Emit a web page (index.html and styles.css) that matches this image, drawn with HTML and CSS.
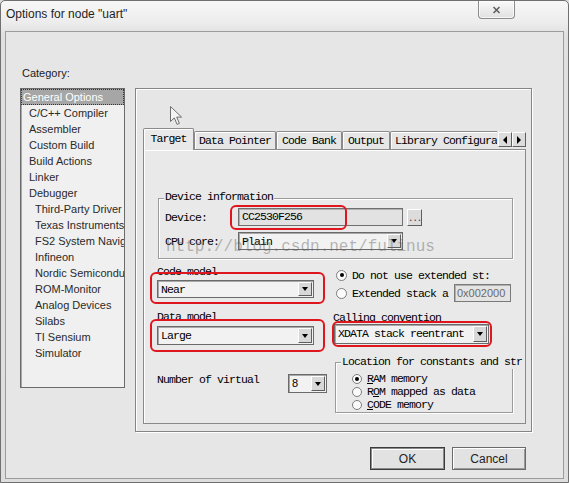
FILE: index.html
```html
<!DOCTYPE html>
<html lang="en">
<head>
<meta charset="utf-8">
<title>Options for node "uart"</title>
<link rel="stylesheet" href="styles.css">
</head>
<body>
<div class="window">
  <div class="titlebar">
    <span class="title">Options for node "uart"</span>
    <div class="close"><svg width="9" height="8" viewBox="0 0 9 8"><path d="M1.5 1 L7.5 7 M7.5 1 L1.5 7" stroke="#5c5c5c" stroke-width="1.5" fill="none"/></svg></div>
  </div>
  <div class="client">
    <div class="main">
      <div class="category">
        <div class="cat-label">Category:</div>
        <ul class="listbox">
          <li class="item sel">General Options</li>
          <li class="item l1">C/C++ Compiler</li>
          <li class="item l1">Assembler</li>
          <li class="item l1">Custom Build</li>
          <li class="item l1">Build Actions</li>
          <li class="item l1">Linker</li>
          <li class="item l1">Debugger</li>
          <li class="item l2">Third-Party Driver</li>
          <li class="item l2">Texas Instruments</li>
          <li class="item l2">FS2 System Navigator</li>
          <li class="item l2">Infineon</li>
          <li class="item l2">Nordic Semiconductor</li>
          <li class="item l2">ROM-Monitor</li>
          <li class="item l2">Analog Devices</li>
          <li class="item l2">Silabs</li>
          <li class="item l2">TI Sensium</li>
          <li class="item l2">Simulator</li>
        </ul>
      </div>
      <div class="frame">
        <div class="tabstrip">
          <div class="tabs">
            <div class="tab active w-target">Target</div>
            <div class="tab w-dp">Data Pointer</div>
            <div class="tab w-cb">Code Bank</div>
            <div class="tab w-out">Output</div>
            <div class="tab w-lib">Library Configura</div>
          </div>
          <div class="scroll">
            <span class="sbtn"><i class="tri-left"></i></span>
            <span class="sbtn"><i class="tri-right"></i></span>
          </div>
        </div>
        <div class="page">
          <div class="group devgroup">
            <span class="group-label">Device information</span>
            <div class="row">
              <span class="lbl-dev">Device:</span>
              <div class="field">CC2530F256</div>
              <div class="browse">...</div>
            </div>
            <div class="row">
              <span class="lbl-dev">CPU core:</span>
              <div class="combo cpu"><span class="combo-text">Plain</span><span class="drop"><i class="tri-down"></i></span></div>
            </div>
          </div>
          <div class="mid">
            <div class="col-left">
              <div class="mlabel first">Code model</div>
              <div class="combo model"><span class="combo-text">Near</span><span class="drop"><i class="tri-down"></i></span></div>
              <div class="mlabel second">Data model</div>
              <div class="combo model tall"><span class="combo-text">Large</span><span class="drop"><i class="tri-down"></i></span></div>
            </div>
            <div class="col-right">
              <div class="radio-row r1">
                <span class="radio on"></span>
                <span class="rtext w-ext1">Do not use extended st:</span>
              </div>
              <div class="radio-row r2">
                <span class="radio"></span>
                <span class="rtext w-ext2">Extended stack a</span>
                <div class="hexfield">0x002000</div>
              </div>
              <div class="mlabel third">Calling convention</div>
              <div class="combo call"><span class="combo-text">XDATA stack reentrant</span><span class="drop"><i class="tri-down"></i></span></div>
            </div>
          </div>
          <div class="bottom">
            <div class="nv-label">Number of virtual</div>
            <div class="combo nv"><span class="combo-text sans">8</span><span class="drop"><i class="tri-down"></i></span></div>
            <div class="group locgroup">
              <span class="group-label">Location for constants and str</span>
              <div class="loc-row"><span class="radio on"></span><span class="rtext"><u>R</u>AM memory</span></div>
              <div class="loc-row"><span class="radio"></span><span class="rtext">R<u>O</u>M mapped as data</span></div>
              <div class="loc-row"><span class="radio"></span><span class="rtext"><u>C</u>ODE memory</span></div>
            </div>
          </div>

          <div class="watermark">http://blog.csdn.net/fulinus</div>
          <div class="mark m-dev"></div>
          <div class="mark m-code"></div>
          <div class="mark m-data"></div>
          <div class="mark m-call"></div>
        </div>
      </div>
    </div>
    <div class="buttons">
      <button class="btn default">OK</button>
      <button class="btn">Cancel</button>
    </div>
  </div>
  <svg class="cursor" width="13" height="20" viewBox="0 0 13 20"><path d="M0.5 0.5 V15.5 L4.3 11.9 L7.1 18.4 L9.4 17.4 L6.7 11.1 H11.6 Z" fill="#f4f4f4" stroke="#6e6e6e" stroke-width="1"/></svg>
</div>
</body>
</html>
```

FILE: styles.css
```css
* { box-sizing: border-box; }
html, body { margin: 0; padding: 0; }
body {
  width: 569px;
  height: 483px;
  overflow: hidden;
  background: #dcdcdc;
  font-family: "Liberation Sans", Arial, sans-serif;
}
.window {
  position: relative;
  width: 569px;
  height: 483px;
  border: 1px solid #707070;
  border-radius: 5px 5px 0 0;
  background: linear-gradient(180deg, #f7f7f7 0, #ececec 22px, #e0e0e0 34px, #dedede 100%);
  display: flex;
  flex-direction: column;
}
.titlebar {
  height: 30px;
  flex: none;
  display: flex;
  justify-content: space-between;
  align-items: flex-start;
}
.title {
  margin: 6px 0 0 5px;
  font-size: 12px;
  line-height: 15px;
  color: #1f1f1f;
}
.close {
  width: 37px;
  height: 18px;
  margin-right: 53px;
  border: 1px solid #8c8c8c;
  border-top: 0;
  border-radius: 0 0 4px 4px;
  background: linear-gradient(#fafafa, #e0e0e0);
  box-shadow: inset 0 0 0 1px rgba(255,255,255,.7);
  display: flex;
  align-items: center;
  justify-content: center;
}
.client {
  margin-left: 4px;
  width: 559px;
  height: 448px;
  border: 1px solid #9c9c9c;
  background: #e6e6e6;
  padding: 35px 37px 0 14px;
  display: flex;
  flex-direction: column;
}
.main {
  display: flex;
  gap: 10px;
  align-items: flex-start;
}
.category { width: 105px; flex: none; }
.cat-label {
  font-size: 11px;
  line-height: 12px;
  height: 12px;
  color: #222;
  margin-bottom: 9px;
  padding-left: 2px;
}
.listbox {
  list-style: none;
  margin: 0;
  padding: 0;
  height: 300px;
  border: 1px solid #6b6b6b;
  box-shadow: inset 1px 1px #a8a8a8;
  background: #f0f0f0;
  overflow: hidden;
}
.item {
  height: 16px;
  line-height: 16px;
  font-size: 11px;
  color: #2a2a2a;
  white-space: nowrap;
  overflow: hidden;
}
.item.sel {
  background: #a6a6a6;
  color: #fff;
  padding-left: 2px;
  outline: 1px dotted #333;
  outline-offset: -1px;
}
.l1 { padding-left: 8px; }
.l2 { padding-left: 14px; }

.frame {
  flex: none;
  width: 397px;
  height: 344px;
  margin-top: 21px;
  border: 1px solid #858585;
  box-shadow: inset 1px 1px #fff, 1px 1px #fff;
  padding: 39px 5px 7px 7px;
  display: flex;
  flex-direction: column;
  font-family: "Liberation Mono", "Courier New", monospace;
  font-size: 11.5px;
  letter-spacing: -0.9px;
  color: #000;
}
.tabstrip {
  height: 21px;
  flex: none;
  display: flex;
  align-items: flex-end;
}
.tabs {
  flex: 1;
  min-width: 0;
  height: 22px;
  margin-bottom: -1px;
  display: flex;
  align-items: flex-end;
  overflow: hidden;
  position: relative;
  z-index: 1;
}
.tab {
  flex: none;
  height: 18px;
  margin-bottom: 1px;
  border: 1px solid #8a8a8a;
  border-bottom: 0;
  border-radius: 2px 2px 0 0;
  box-shadow: inset 1px 1px #fff;
  background: #e6e6e6;
  text-align: center;
  line-height: 17px;
  white-space: nowrap;
  overflow: hidden;
}
.tab.active {
  height: 22px;
  margin-bottom: 0;
  background: #e9e9e9;
  line-height: 19px;
}
.w-target { width: 51px; }
.w-dp { width: 82px; }
.w-cb { width: 66px; }
.w-out { width: 48px; }
.w-lib { width: 130px; text-align: left; padding-left: 4px; }
.scroll {
  flex: none;
  display: flex;
  margin-bottom: 2px;
  margin-left: 1px;
}
.sbtn {
  width: 14px;
  height: 15px;
  border: 1px solid;
  border-color: #fff #5e5e5e #5e5e5e #fff;
  background: #dcdcdc;
  display: flex;
  align-items: center;
  justify-content: center;
}
.tri-left { width: 0; height: 0; border-top: 4px solid transparent; border-bottom: 4px solid transparent; border-right: 4px solid #000; }
.tri-right { width: 0; height: 0; border-top: 4px solid transparent; border-bottom: 4px solid transparent; border-left: 4px solid #000; }
.tri-down { width: 0; height: 0; border-left: 3.5px solid transparent; border-right: 3.5px solid transparent; border-top: 4px solid #000; }

.page {
  position: relative;
  height: 275px;
  border: 1px solid #8a8a8a;
  box-shadow: inset 1px 1px #fff;
  background: #e9e9e9;
}

.group {
  position: relative;
  border: 1px solid #9b9b9b;
  box-shadow: inset 1px 1px #fff, 1px 1px #fff;
}
.group-label {
  position: absolute;
  top: -9px;
  left: 5px;
  padding: 0 1px;
  line-height: 14px;
  background: #e9e9e9;
  white-space: nowrap;
}
.devgroup {
  margin: 48px 0 0 14px;
  width: 355px;
  height: 61px;
  padding: 9px 0 0 6px;
}
.row {
  display: flex;
  align-items: center;
  height: 18px;
}
.row + .row { margin-top: 6px; }
.lbl-dev { width: 73px; flex: none; }
.field {
  width: 165px;
  height: 18px;
  border: 1px solid #707070;
  box-shadow: inset 1px 1px #b0b0b0;
  background: #e2e2e2;
  padding-left: 3px;
  line-height: 16px;
}
.browse {
  width: 15px;
  height: 17px;
  margin-left: 4px;
  border: 1px solid;
  border-color: #fff #5e5e5e #5e5e5e #fff;
  background: #dcdcdc;
  font-size: 9px;
  letter-spacing: -1px;
  line-height: 18px;
  text-align: center;
  color: #333;
}
.combo {
  display: flex;
  height: 18px;
  border: 1px solid #6a6a6a;
  box-shadow: inset 1px 1px #a8a8a8;
  background: #f2f2f2;
  padding: 1px;
}
.combo-text {
  flex: 1;
  min-width: 0;
  padding-left: 2px;
  line-height: 15px;
  white-space: nowrap;
  overflow: hidden;
}
.drop {
  flex: none;
  width: 14px;
  border: 1px solid;
  border-color: #fff #5e5e5e #5e5e5e #fff;
  background: #d8d8d8;
  display: flex;
  align-items: center;
  justify-content: center;
}
.combo.cpu { width: 165px; }

.mid { display: flex; }
.col-left { margin-left: 13px; width: 157px; flex: none; }
.col-right { margin-left: 19px; width: 179px; flex: none; }
.mlabel { line-height: 12px; height: 12px; white-space: nowrap; }
.mlabel.first { margin-top: 7px; }
.mlabel.second { margin-top: 13px; }
.mlabel.third { margin-top: 10px; }
.combo.model { margin-top: 2px; }
.combo.model.tall { margin-top: 3px; height: 19px; }
.combo.call { margin-left: 1px; width: 155px; height: 20px; }

.radio-row { display: flex; align-items: center; }
.radio-row.r1 { margin-top: 9px; height: 14px; }
.radio-row.r2 { margin-top: 2px; height: 18px; }
.radio {
  flex: none;
  width: 11px;
  height: 11px;
  margin-left: 3px;
  border-radius: 50%;
  border: 1px solid #7c7c7c;
  background: #fbfbfb;
  display: flex;
  align-items: center;
  justify-content: center;
}
.radio.on::after {
  content: "";
  width: 4px;
  height: 4px;
  border-radius: 50%;
  background: #000;
}
.rtext { margin-left: 5px; white-space: nowrap; }
.w-ext2 { width: 99px; }
.hexfield {
  margin-left: 3px;
  width: 57px;
  height: 18px;
  border: 1px solid #7a7a7a;
  box-shadow: inset 1px 1px #b0b0b0;
  background: #e4e4e4;
  font-family: "Liberation Sans", Arial, sans-serif;
  letter-spacing: 0;
  font-size: 11px;
  line-height: 16px;
  color: #6a6a6a;
  padding-left: 2px;
}

.bottom {
  display: flex;
  align-items: flex-start;
  margin-top: 17px;
  padding-left: 13px;
}
.nv-label {
  width: 105px;
  flex: none;
  margin-top: 12px;
  line-height: 12px;
  white-space: nowrap;
}
.combo.nv {
  flex: none;
  width: 39px;
  height: 19px;
  margin-top: 12px;
  margin-left: 26px;
}
.sans {
  font-family: "Liberation Sans", Arial, sans-serif;
  letter-spacing: 0;
  font-size: 11px;
}
.locgroup {
  flex: none;
  margin-left: 8px;
  width: 178px;
  height: 51px;
  padding: 9px 0 0 13px;
}
.locgroup .group-label { top: -8px; }
.loc-row {
  display: flex;
  align-items: center;
  height: 13px;
}
.loc-row .radio { width: 10px; height: 10px; }

.watermark {
  position: absolute;
  left: 22px;
  top: 89px;
  font-family: "Liberation Mono", "Courier New", monospace;
  font-size: 16px;
  letter-spacing: 0;
  line-height: 16px;
  color: rgba(100, 100, 100, 0.45);
  white-space: nowrap;
  pointer-events: none;
}
.mark {
  position: absolute;
  border: 2px solid #e0161e;
  border-radius: 6px;
  pointer-events: none;
}
.m-dev { left: 86px; top: 55px; width: 117px; height: 25px; }
.m-code { left: 6px; top: 122px; width: 175px; height: 32px; }
.m-data { left: 6px; top: 169px; width: 175px; height: 33px; }
.m-call { left: 188px; top: 171px; width: 160px; height: 26px; }

.buttons {
  display: flex;
  justify-content: flex-end;
  gap: 7px;
  margin-top: 15px;
}
.btn {
  height: 23px;
  margin: 0;
  padding: 0;
  font-family: "Liberation Sans", Arial, sans-serif;
  font-size: 12px;
  color: #222;
  background: #e2e2e2;
  border: 1px solid #6a6a6a;
  box-shadow: inset 1px 1px #fff, inset -1px -1px #9a9a9a;
}
.btn.default { width: 75px; border-color: #3c3c3c; box-shadow: inset 0 0 0 1px #8a8a8a, inset 2px 2px #fff; }
.btn:not(.default) { width: 74px; }

.cursor {
  position: absolute;
  left: 169px;
  top: 105px;
}
```
